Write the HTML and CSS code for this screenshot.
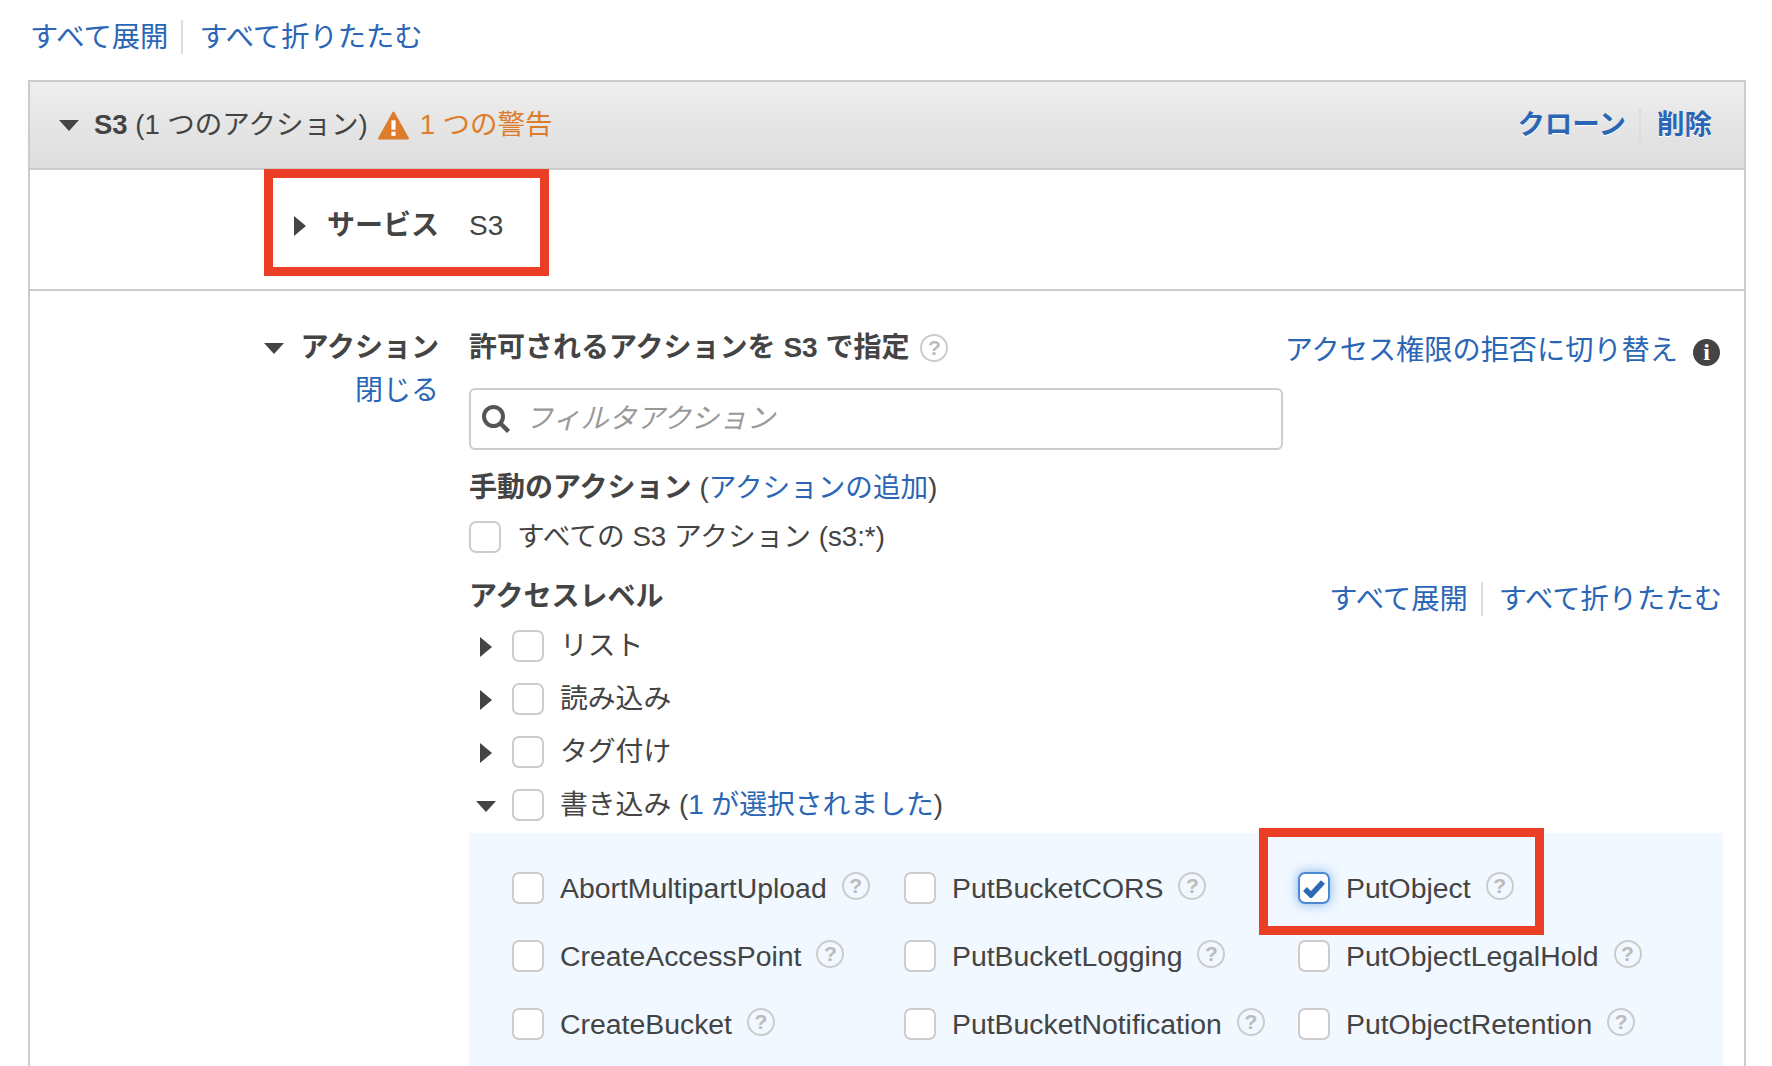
FILE: index.html
```html
<!DOCTYPE html>
<html lang="ja">
<head>
    <meta charset="UTF-8">
    <title>S3 アクション</title>
    <link rel="stylesheet" href="styles.css">
</head>
<body>
    <div class="bulk-links top-links">
        <a href="#">すべて展開</a><span class="sep"></span><a href="#">すべて折りたたむ</a>
    </div>

    <div class="panel">
        <div class="panel-head">
            <span class="caret-down head-caret"></span>
            <span class="head-title"><b>S3</b> (1 つのアクション)</span>
            <svg class="warn-icon" viewBox="0 0 30 28"><path d="M15 1.5 L29 26.5 H1 Z" fill="#dd7d2c" stroke="#dd7d2c" stroke-width="2" stroke-linejoin="round"/><rect x="13" y="9" width="4" height="9" fill="#fff"/><rect x="13" y="20" width="4" height="4" fill="#fff"/></svg>
            <span class="warn-text">1 つの警告</span>
            <span class="head-actions"><a href="#">クローン</a><span class="sep"></span><a href="#">削除</a></span>
        </div>

        <div class="service-row">
            <div class="row-label"><span class="caret-right"></span><b>サービス</b></div>
            <div>S3</div>
        </div>

        <div class="action-row">
            <div class="row-label-col">
                <div class="row-label action-label"><span class="caret-down"></span><b>アクション</b></div>
                <a class="close-link" href="#">閉じる</a>
            </div>
            <div class="action-body">
                <div class="title-row">
                    <span><b>許可されるアクションを S3 で指定</b><span class="help">?</span></span>
                    <span class="deny-link"><a href="#">アクセス権限の拒否に切り替え</a><span class="info">i</span></span>
                </div>
                <div class="search">
                    <svg class="search-icon" viewBox="0 0 30 30"><circle cx="12.5" cy="12.5" r="9.5" fill="none" stroke="#555" stroke-width="4"/><line x1="19.5" y1="19.5" x2="27.5" y2="27.5" stroke="#555" stroke-width="4.5"/></svg>
                    <span class="placeholder">フィルタアクション</span>
                </div>
                <div class="manual-title"><b>手動のアクション</b> (<a href="#">アクションの追加</a>)</div>
                <div class="check-row all-row"><span class="box"></span>すべての S3 アクション (s3:*)</div>
                <div class="title-row level-title">
                    <b>アクセスレベル</b>
                    <span class="bulk-links"><a href="#">すべて展開</a><span class="sep"></span><a href="#">すべて折りたたむ</a></span>
                </div>
                <div class="tree">
                    <div class="tree-row"><span class="tree-caret"><span class="caret-right"></span></span><span class="box"></span>リスト</div>
                    <div class="tree-row"><span class="tree-caret"><span class="caret-right"></span></span><span class="box"></span>読み込み</div>
                    <div class="tree-row"><span class="tree-caret"><span class="caret-right"></span></span><span class="box"></span>タグ付け</div>
                    <div class="tree-row"><span class="tree-caret"><span class="caret-down"></span></span><span class="box"></span>書き込み (<a href="#">1 が選択されました</a>)</div>
                </div>
                <div class="action-grid">
                    <div class="check-row"><span class="box"></span>AbortMultipartUpload<span class="help">?</span></div>
                    <div class="check-row"><span class="box"></span>PutBucketCORS<span class="help">?</span></div>
                    <div class="check-row"><span class="box checked"><svg viewBox="0 0 24 20"><path d="M3 11 L9 17 L21 4" fill="none" stroke="#2d6ab5" stroke-width="5.5"/></svg></span>PutObject<span class="help">?</span></div>
                    <div class="check-row"><span class="box"></span>CreateAccessPoint<span class="help">?</span></div>
                    <div class="check-row"><span class="box"></span>PutBucketLogging<span class="help">?</span></div>
                    <div class="check-row"><span class="box"></span>PutObjectLegalHold<span class="help">?</span></div>
                    <div class="check-row"><span class="box"></span>CreateBucket<span class="help">?</span></div>
                    <div class="check-row"><span class="box"></span>PutBucketNotification<span class="help">?</span></div>
                    <div class="check-row"><span class="box"></span>PutObjectRetention<span class="help">?</span></div>
                </div>
            </div>
        </div>
    </div>

    <div class="red-box red-service"></div>
    <div class="red-box red-object"></div>
</body>
</html>
```

FILE: styles.css
```css
html, body { height: 1066px; overflow: hidden; }
body { position: relative; margin: 0; background: #fff; color: #444; font-family: "Liberation Sans", "Noto Sans CJK JP", sans-serif; font-size: 28px; line-height: 32px; }
a { color: #2a66b5; text-decoration: none; }
b { font-weight: 700; }

.sep { display: inline-block; width: 2px; height: 34px; background: #ddd; margin: 0 16px 0 13px; }
.bulk-links { display: inline-flex; align-items: center; font-size: 28.3px; }
.top-links { display: flex; height: 74px; margin: 0 0 6px 30px; }

.panel { width: 1714px; height: 1100px; margin-left: 28px; border: 2px solid #ccc; border-bottom: none; }
.panel-head { display: flex; align-items: center; height: 86px; padding: 0 32px 0 29px; background: linear-gradient(#eee, #ddd); border-bottom: 2px solid #ccc; font-size: 27.5px; }
.head-caret { margin-right: 15px; }
.warn-icon { width: 31px; height: 29px; margin: 0 11px 0 10px; }
.warn-text { color: #dd7d2c; }
.head-actions { display: flex; align-items: center; margin-left: auto; font-weight: 700; text-shadow: 0 1px 0 #fff; }

.caret-down { display: inline-block; width: 0; height: 0; border-style: solid; border-width: 11px 10px 0; border-color: #444 transparent transparent; }
.caret-right { display: inline-block; width: 0; height: 0; border-style: solid; border-width: 10px 0 10px 12px; border-color: transparent transparent transparent #444; }

.service-row { display: flex; align-items: center; box-sizing: border-box; height: 121px; padding-bottom: 7px; border-bottom: 2px solid #ccc; }
.row-label { display: flex; align-items: center; justify-content: space-between; width: 175px; margin-left: 234px; margin-right: 30px; }
.service-row .row-label { width: 145px; margin-left: 264px; }

.action-row { display: flex; }
.row-label-col { width: 439px; flex: none; padding-top: 41px; text-align: right; }
.close-link { display: block; margin: 11px 30px 0 0; }
.action-body { flex: 1; padding: 41px 21px 0 0; }

.title-row { display: flex; justify-content: space-between; align-items: center; height: 32px; padding-right: 3px; }
.title-row .bulk-links, .deny-link { margin-top: 4px; }
.title-row .bulk-links { margin-right: -2px; }
.deny-link { display: inline-flex; align-items: center; }
.deny-link a { font-size: 28.2px; }
.info { display: inline-block; width: 27px; height: 27px; margin: 4px 0 0 15px; border-radius: 50%; background: #444; color: #fff; font-family: "Liberation Serif", serif; font-weight: 700; font-size: 24px; line-height: 27px; text-align: center; }
.help { display: inline-block; flex: none; width: 28px; height: 28px; box-sizing: border-box; margin-left: 11px; border: 2px solid #ccc; border-radius: 50%; color: #bbb; font-size: 21px; font-weight: 700; line-height: 24px; text-align: center; vertical-align: 2px; }

.search { display: flex; align-items: center; box-sizing: border-box; width: 814px; height: 62px; margin-top: 24px; padding-left: 10px; border: 2px solid #ccc; border-radius: 6px; background: #fff; }
.search-icon { width: 30px; height: 30px; margin-right: 14px; }
.placeholder { color: #999; font-style: italic; }

.manual-title { margin-top: 22px; }
.manual-title a { font-size: 27.6px; }
.check-row { display: flex; align-items: center; }
.all-row { height: 34px; margin-top: 16px; font-size: 27.7px; }
.level-title { margin-top: 27px; }

.box { display: inline-flex; align-items: center; justify-content: center; flex: none; box-sizing: border-box; width: 32px; height: 32px; margin-right: 16px; border: 2px solid #ccc; border-radius: 7px; background: #fff; }
.box.checked { border-color: #4a88d8; box-shadow: 0 0 12px rgba(74, 136, 216, 0.65); }
.box.checked svg { width: 24px; height: 20px; }

.tree { margin-top: 6px; }
.tree-row { display: flex; align-items: center; height: 53px; font-size: 27.8px; }
.tree-caret { display: flex; justify-content: center; width: 34px; margin: 3px 9px 0 0; }

.action-grid { display: grid; grid-template-columns: 392px 394px 1fr; grid-auto-rows: 68px; align-items: center; margin-top: 2px; padding: 21px 0 40px 43px; background: #f1f8ff; font-size: 28.4px; }
.action-grid .help { margin: -4px 0 0 15px; }

.red-box { position: absolute; box-sizing: border-box; width: 285px; height: 107px; border: 9px solid #eb3f25; }
.red-service { left: 264px; top: 169px; }
.red-object { left: 1259px; top: 828px; }
```
